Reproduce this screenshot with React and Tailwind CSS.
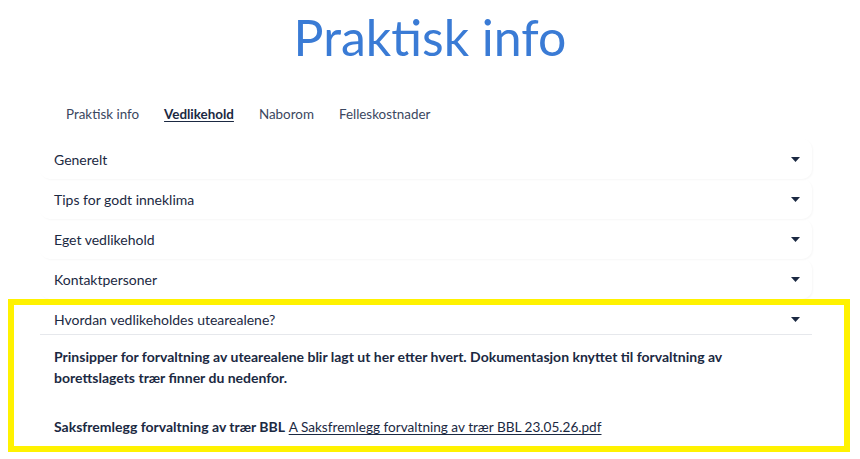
const tabs = ['Praktisk info', 'Vedlikehold', 'Naborom', 'Felleskostnader'];

const sections = ['Generelt', 'Tips for godt inneklima', 'Eget vedlikehold', 'Kontaktpersoner'];

function Caret() {
  return (
    <svg width="9" height="5" viewBox="0 0 9 5" className="shrink-0">
      <path d="M0 0 H9 L4.5 5 Z" fill="#1b2942" />
    </svg>
  );
}

function Row({ title }) {
  return (
    <div className="flex h-10 items-center justify-between rounded-[10px] pl-[14px] pr-[12px] shadow-[1px_1px_2px_rgba(0,0,0,0.035)]">
      <span className="text-[14px] text-[#1b2942]">{title}</span>
      <Caret />
    </div>
  );
}

export default function App() {
  return (
    <div className="min-h-screen bg-white font-['Lato',sans-serif] text-[#1b2942]">
      <h1 className="pt-[9px] text-center text-[50px] leading-[56px] text-[#3a7bd5]">Praktisk info</h1>

      <nav className="mt-[39px] flex gap-[25px] pl-[66px] text-[13.4px] leading-[21px]">
        {tabs.map((t) => (
          <span
            key={t}
            className={t === 'Vedlikehold' ? 'font-bold underline underline-offset-2' : 'text-[#3b4760]'}
          >
            {t}
          </span>
        ))}
      </nav>

      <div className="ml-[40px] mt-[14px] w-[772px]">
        {sections.map((s) => (
          <Row key={s} title={s} />
        ))}
      </div>

      <div className="ml-[8px] w-[842px] border-[6px] border-[#fff200] pb-[8px] pl-[26px] pr-[32px]">
        <div className="flex h-[30px] items-center justify-between border-b border-[#e6e8ec] pl-[14px] pr-[12px]">
          <span className="text-[14px]">Hvordan vedlikeholdes utearealene?</span>
          <Caret />
        </div>
        <div className="pl-[14px] pt-[11px] text-[14px] leading-[21px]">
          <p className="font-bold">
            Prinsipper for forvaltning av utearealene blir lagt ut her etter hvert. Dokumentasjon knyttet til forvaltning av
            <br />
            borettslagets trær finner du nedenfor.
          </p>
          <p className="mt-[28px]">
            <span className="font-bold">Saksfremlegg forvaltning av trær BBL</span>{' '}
            <a className="text-[13.6px] underline underline-offset-2">A Saksfremlegg forvaltning av trær BBL 23.05.26.pdf</a>
          </p>
        </div>
      </div>
    </div>
  );
}
